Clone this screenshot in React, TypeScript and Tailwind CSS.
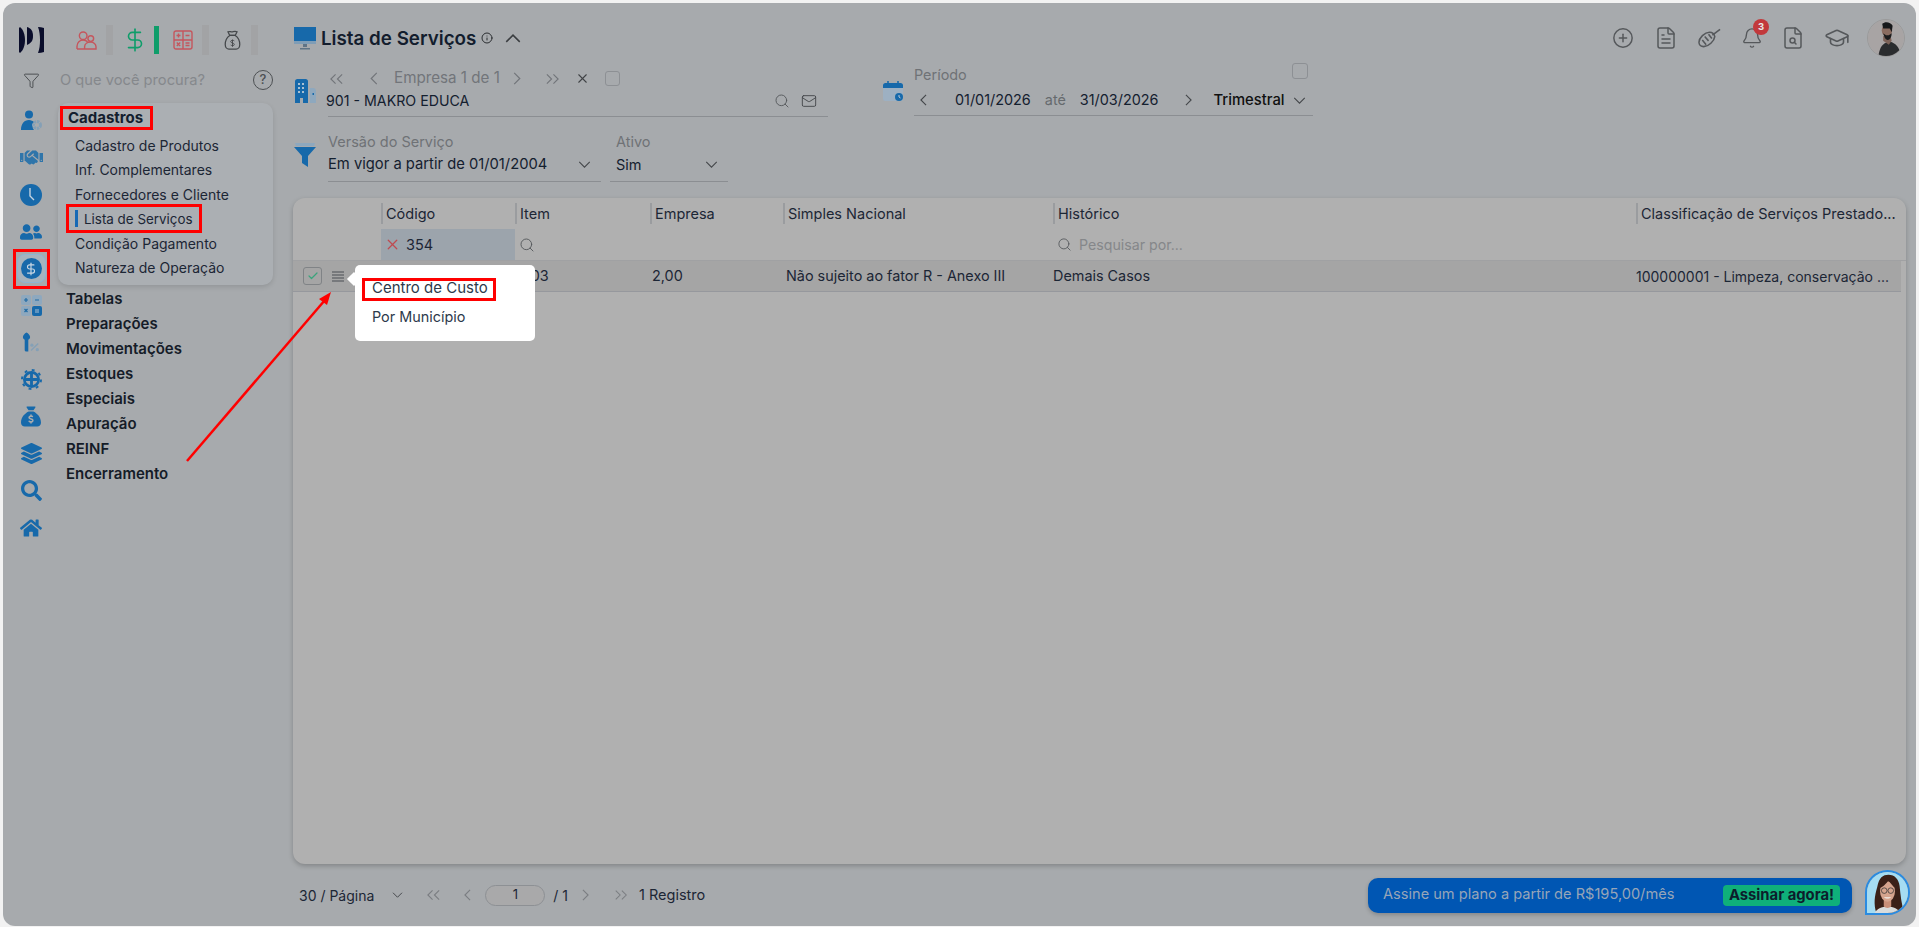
import { Bell, Check, CirclePlus, DollarSign, FileSearch, FileText, Filter, GraduationCap, Info, Mail, Search, X } from "lucide-react";
import { FaHandshake, FaHome, FaLayerGroup, FaSearch, FaUserFriends } from "react-icons/fa";
import { FaSackDollar } from "react-icons/fa6";

const menuItems = ["Cadastro de Produtos", "Inf. Complementares", "Fornecedores e Cliente", "Lista de Serviços", "Condição Pagamento", "Natureza de Operação"];
const menuGroups = ["Tabelas", "Preparações", "Movimentações", "Estoques", "Especiais", "Apuração", "REINF", "Encerramento"];

function DoubleChevron({ right, className }: { right?: boolean; className?: string }) {
  return (
    <svg viewBox="0 0 16 12" fill="none" stroke="currentColor" strokeWidth="1.2" className={className}>
      {right ? <path d="M2 1l5 5-5 5M9 1l5 5-5 5" /> : <path d="M7 1L2 6l5 5M14 1L9 6l5 5" />}
    </svg>
  );
}

function ChevDown({ className, up }: { className?: string; up?: boolean }) {
  return (
    <svg viewBox="0 0 14 8" fill="none" stroke="currentColor" strokeWidth="1.3" className={className}>
      <path d={up ? "M1 7l6-6 6 6" : "M1 1l6 6 6-6"} />
    </svg>
  );
}

function ChevSide({ className, right }: { className?: string; right?: boolean }) {
  return (
    <svg viewBox="0 0 8 14" fill="none" stroke="currentColor" strokeWidth="1.3" className={className}>
      <path d={right ? "M1 1l6 6-6 6" : "M7 1L1 7l6 6"} />
    </svg>
  );
}

function Logo() {
  return (
    <svg viewBox="0 0 26 26" className="w-[26px] h-[26px]" fill="#0a0d2b">
      <path d="M0 1l1-1c3.500 3 5 8 5 13s-1.500 10-5 13l-1-1z" />
      <path d="M8 0c4 1 6 4 6 9s-2 7-6 9z" />
      <path d="M19 0c2 0 4 .5 6 1v24c-2 .5-4 1-6 1 1.500-4 2-8 2-13s-.5-9-2-13z" />
    </svg>
  );
}

function Broom() {
  return (
    <svg viewBox="0 0 24 20" fill="none" stroke="currentColor" strokeWidth="1.6" className="w-[23px] h-[20px]">
      <path d="M15 7l8-6" />
      <path d="M12 4c3 0 5 2 5.500 4.500C17 13 11 19 6 19c-3 0-5-2-5-4.500C1 10 7 4 12 4z" />
      <path d="M7 8.500l4 4.500M4.500 12l4 5M11 6l3.500 4.500" />
    </svg>
  );
}

function MoneyBag() {
  return (
    <svg viewBox="0 0 18 22" fill="none" stroke="#45484b" strokeWidth="1.4" className="w-[17px] h-[20px]">
      <path d="M6 6L4 2c2-1 3 .5 5 0s3-1 5 0l-2 4z" />
      <path d="M6 6h6c3 2 5 6 5 10 0 3-2 5-4 5H5c-2 0-4-2-4-5 0-4 2-8 5-10z" />
      <path d="M11 12c-1-1-4-1-4 .8s4 1.200 4 3-3 1.700-4 .7M9 10.500v8" strokeWidth="1" />
    </svg>
  );
}

function PeopleRed() {
  return (
    <svg viewBox="0 0 22 20" fill="none" stroke="#c5565d" strokeWidth="1.5" className="w-[21px] h-[19px]">
      <circle cx="7.500" cy="5" r="4" />
      <circle cx="15.500" cy="8" r="3" />
      <path d="M1 19v-3c0-4 3-6.500 6.500-6.500 2 0 3.500.7 4.500 2M9 19h12v-2.500c0-2.500-2.500-5-5.500-5-3.500 0-6.500 2-6.500 5zM1 19h8" />
    </svg>
  );
}

function Calc({ red }: { red?: boolean }) {
  if (red) {
    return (
      <svg viewBox="0 0 20 20" fill="none" stroke="#c5565d" strokeWidth="1.4" className="w-[20px] h-[20px]">
        <rect x="1" y="1" width="18" height="18" rx="2" />
        <path d="M10 1v18M1 10h18M3.500 5.500h4M5.500 3.500v4M12.500 5.500h4M3.800 12.500l3.400 3.400M7.200 12.500l-3.400 3.400M12.500 13h4M12.500 15.500h4" />
      </svg>
    );
  }
  return (
    <svg viewBox="0 0 21 21" className="w-[21px] h-[21px]">
      <rect x="0" y="0" width="10" height="10" rx="2" fill="#8ea8be" />
      <rect x="11" y="0" width="10" height="10" rx="2" fill="#8ea8be" />
      <rect x="0" y="11" width="10" height="10" rx="2" fill="#8ea8be" />
      <rect x="11" y="11" width="10" height="10" rx="2" fill="#1769aa" />
      <path d="M3 5h4M5 3v4M14 5h4M3.500 14l3 3M6.500 14l-3 3" stroke="#1e6aa5" strokeWidth="1.2" />
      <path d="M14 15h4M14 17h4" stroke="#a9c0d2" strokeWidth="1.2" />
    </svg>
  );
}

function PersonGear() {
  return (
    <svg viewBox="0 0 21 21" className="w-[21px] h-[21px]">
      <circle cx="8" cy="4.500" r="4" fill="#1769aa" />
      <path d="M0 20c0-6 3-10 8-10 2 0 4 1 5 2-2 2-2 6 0 8z" fill="#1769aa" />
      <circle cx="16" cy="15" r="3.500" fill="none" stroke="#85a0b6" strokeWidth="3" strokeDasharray="2.400 0.800" />
    </svg>
  );
}

function Clock() {
  return (
    <svg viewBox="0 0 22 22" className="w-[22px] h-[22px]">
      <circle cx="11" cy="11" r="11" fill="#1769aa" />
      <path d="M10 4v8l4 4" fill="none" stroke="#c4d3e0" strokeWidth="1.400" />
    </svg>
  );
}

function KeyPct() {
  return (
    <svg viewBox="0 0 20 22" className="w-[18px] h-[21px]">
      <path d="M5 0c2 1 4 3 4 5 0 1.500-1 2.500-2 3v13H4l-1-1V8C2 7.500 1 6.500 1 5c0-2 2-4 4-5z" fill="#1769aa" />
      <path d="M10 20l8-8" stroke="#85a0b6" strokeWidth="1.600" />
      <circle cx="11" cy="14" r="1.800" fill="#85a0b6" />
      <circle cx="17" cy="19" r="1.800" fill="#85a0b6" />
    </svg>
  );
}

function GearCross() {
  return (
    <svg viewBox="0 0 22 22" className="w-[21px] h-[21px]" fill="none" stroke="#1769aa">
      <circle cx="11" cy="11" r="7.500" strokeWidth="2.800" />
      <circle cx="11" cy="11" r="10" strokeWidth="2" strokeDasharray="3 4.850" />
      <path d="M11 4v14M4 11h14" strokeWidth="3" />
    </svg>
  );
}

function BuildingIcon() {
  return (
    <svg viewBox="0 0 22 24" className="w-[22px] h-[24px]">
      <path d="M1 2.500A2.500 2.500 0 0 1 3.500 0h8A2.500 2.500 0 0 1 14 2.500V24H9v-5H6v5H1z" fill="#1769aa" />
      <path d="M4 4h2v2H4zM8 4h2v2H8zM4 8h2v2H4zM8 8h2v2H8zM4 12h2v2H4zM8 12h2v2H8z" fill="#a9c0d2" />
      <path d="M16 9h3a3 3 0 0 1 3 3v12h-6z" fill="#8ea8be" />
      <rect x="18.500" y="14" width="1.500" height="2" fill="#1769aa" />
    </svg>
  );
}

function MonitorIcon() {
  return (
    <svg viewBox="0 0 22 24" className="w-[22px] h-[24px]">
      <path d="M0 1h22v14H0z" fill="#1769aa" />
      <path d="M0 15h22v3H0z" fill="#7f9db6" />
      <path d="M9 18h4v3h-4z" fill="#5f7486" />
      <path d="M6 22h10v1.500H6z" fill="#5f7486" />
    </svg>
  );
}

function FunnelIcon() {
  return (
    <svg viewBox="0 0 22 24" className="w-[22px] h-[24px]">
      <path d="M1 0h20l-1 3H2z" fill="#8ea8be" />
      <path d="M0 4h22l-8 9v11l-6-4v-7z" fill="#1769aa" />
    </svg>
  );
}

function CalendarIcon() {
  return (
    <svg viewBox="0 0 20 20" className="w-[20px] h-[20px]">
      <rect x="0" y="2" width="20" height="18" rx="2.500" fill="#9db0c2" />
      <path d="M0 4.500A2.500 2.500 0 0 1 2.500 2h15A2.500 2.500 0 0 1 20 4.500V7H0z" fill="#1769aa" />
      <path d="M5 0v4M15 0v4" stroke="#1769aa" strokeWidth="1.600" />
      <circle cx="16" cy="16" r="4" fill="#1769aa" />
      <path d="M16 14v2l1.500 1" stroke="#b8c9d8" fill="none" />
    </svg>
  );
}

function ManAvatar() {
  return (
    <svg viewBox="0 0 38 38" className="w-[38px] h-[38px] rounded-full border border-[#9a9a9a]">
      <rect width="38" height="38" fill="#a8a4a4" />
      <path d="M11 38c1-7 3-12 8-14l5-1c5 2 9 5 11 15z" fill="#2a2c2e" />
      <path d="M16 22l6 4 3-4-1-4-8-1z" fill="#7c6258" />
      <ellipse cx="20" cy="11" rx="5.500" ry="6.500" fill="#8a6c60" />
      <path d="M15 4c3-3 9-2 11 2l-1 7-2-4-7 0z" fill="#17181a" />
      <path d="M16 14c1 3 2 7 5 7 2 0 4-3 4-7l-3 2h-3z" fill="#1c1c1d" />
    </svg>
  );
}

function WomanAvatar() {
  return (
    <svg viewBox="0 0 44 44" className="w-[45px] h-[45px] rounded-full rounded-bl-none border-2 border-[#2b8be0]">
      <rect width="44" height="44" fill="#a5dcf2" />
      <path d="M10 44c-3-10-2-18 1-28C13 6 17 3 23 3c7 0 11 5 12 12 1 10 2 20 5 29z" fill="#3a2018" />
      <path d="M8 44c2-4 8-7 14-7s12 3 14 7z" fill="#d9dcdc" />
      <path d="M18 30h8v7c-2 2-6 2-8 0z" fill="#c98f78" />
      <ellipse cx="22" cy="21" rx="8" ry="11" fill="#d6a48e" />
      <path d="M14 17c3-1 7-5 9-8 2 3 5 6 7 8-1-5-3-9-8-9s-8 4-8 9z" fill="#3a2018" />
      <circle cx="18.500" cy="20" r="3" fill="none" stroke="#333" strokeWidth=".8" />
      <circle cx="25.500" cy="20" r="3" fill="none" stroke="#333" strokeWidth=".8" />
      <path d="M18 27c2 2 6 2 8 0z" fill="#f4f1ee" />
    </svg>
  );
}

function SideIcon({ children }: { children: React.ReactNode }) {
  return <div className="h-[37px] flex items-center justify-center text-[#1769aa]">{children}</div>;
}

function Sidebar() {
  return (
    <aside className="w-[290px] shrink-0 flex flex-col">
      <div className="h-[30px] mt-[22px] flex items-center pl-[16px]">
        <Logo />
        <div className="ml-[31px]"><PeopleRed /></div>
        <div className="w-[7px] h-[30px] ml-[9px] bg-[#a2a3a5]" />
        <DollarSign className="w-[26px] h-[26px] ml-[9px] text-[#0f9d6a]" strokeWidth={1.5} />
        <div className="w-[5px] h-[28px] ml-[6px] bg-[#0f9d6a]" />
        <div className="ml-[14px]"><Calc red /></div>
        <div className="w-[7px] h-[30px] ml-[9px] bg-[#a2a3a5]" />
        <div className="ml-[15px]"><MoneyBag /></div>
        <div className="w-[7px] h-[30px] ml-[10px] bg-[#a2a3a5]" />
      </div>

      <div className="h-[20px] mt-[15px] flex items-center pl-[20px]">
        <Filter className="w-[17px] h-[17px] text-[#45484b]" strokeWidth={1.3} />
        <span className="ml-[20px] text-[14.700px] text-[#85888c]">O que você procura?</span>
        <div className="ml-auto mr-[20px] w-[20px] h-[20px] rounded-full border-[1.500px] border-[#4d5053] flex items-center justify-center text-[13px] font-medium text-[#4d5053]">?</div>
      </div>

      <div className="flex mt-[13px]">
        <div className="w-[55px] flex flex-col pl-[1px] -mt-[1px]">
          <SideIcon><PersonGear /></SideIcon>
          <SideIcon><FaHandshake className="w-[23px] h-[23px] text-[#2f75aa]" /></SideIcon>
          <SideIcon><Clock /></SideIcon>
          <SideIcon><FaUserFriends className="w-[22px] h-[22px]" /></SideIcon>
          <SideIcon>
            <div className="w-[29px] h-[29px] rounded-[8px] border border-[#8fb4d2] bg-[#a6b3bd] flex items-center justify-center">
              <div className="w-[21px] h-[21px] rounded-full bg-[#1769aa] flex items-center justify-center">
                <DollarSign className="w-[14px] h-[14px] text-[#c9d8e4]" strokeWidth={2} />
              </div>
            </div>
          </SideIcon>
          <SideIcon><Calc /></SideIcon>
          <SideIcon><KeyPct /></SideIcon>
          <SideIcon><GearCross /></SideIcon>
          <SideIcon><FaSackDollar className="w-[20px] h-[21px]" /></SideIcon>
          <SideIcon><FaLayerGroup className="w-[21px] h-[21px]" /></SideIcon>
          <SideIcon><FaSearch className="w-[21px] h-[21px]" /></SideIcon>
          <SideIcon><FaHome className="w-[22px] h-[22px]" /></SideIcon>
        </div>

        <div className="flex flex-col">
          <div className="w-[215px] h-[182px] rounded-[10px] bg-[#abafb3] shadow-[0_2px_5px_rgba(0,0,0,0.12)] pt-[3px]">
            <div className="h-[24px] pl-[10px] flex items-center text-[15px] font-bold text-[#141e2e]">Cadastros</div>
            <div className="flex flex-col mt-[3px]">
              {menuItems.map((item) => (
                <div key={item} className={`h-[24.500px] pl-[17px] flex items-center text-[#1c2635] ${item === "Lista de Serviços" ? "text-[13.400px]" : "text-[14px]"}`}>
                  {item === "Lista de Serviços" && <span className="w-[3px] h-[17px] bg-[#1769b5] mr-[6px]" />}
                  {item}
                </div>
              ))}
            </div>
          </div>
          <div className="flex flex-col pl-[8px] mt-[2px]">
            {menuGroups.map((g) => (
              <div key={g} className="h-[25px] flex items-center text-[15px] font-semibold text-[#151c28]">{g}</div>
            ))}
          </div>
        </div>
      </div>
    </aside>
  );
}

function TopBar() {
  return (
    <div className="h-[38px] mt-[16px] flex items-center justify-between pr-[11px]">
      <div className="flex items-center pl-[1px]">
        <MonitorIcon />
        <h1 className="ml-[5px] mt-[2px] text-[18.800px] font-semibold text-[#131d2d]">Lista de Serviços</h1>
        <Info className="w-[12px] h-[12px] ml-[5px] text-[#2b2e31]" />
        <ChevDown up className="w-[16px] h-[9px] ml-[12px] text-[#3a3d40]" />
      </div>
      <div className="flex items-center text-[#55585b]">
        <CirclePlus className="w-[22px] h-[22px]" strokeWidth={1.6} />
        <FileText className="w-[24px] h-[24px] ml-[20px]" strokeWidth={1.5} />
        <div className="ml-[20px]"><Broom /></div>
        <div className="relative ml-[20px]">
          <Bell className="w-[22px] h-[22px]" strokeWidth={1.5} />
          <span className="absolute -top-[8px] -right-[6px] w-[16px] h-[16px] rounded-full bg-[#c2393c] text-[#e7e7e7] text-[9.500px] font-bold flex items-center justify-center">3</span>
        </div>
        <FileSearch className="w-[24px] h-[24px] ml-[18px]" strokeWidth={1.5} />
        <GraduationCap className="w-[26px] h-[26px] ml-[19px]" strokeWidth={1.5} />
        <div className="ml-[17px]"><ManAvatar /></div>
      </div>
    </div>
  );
}

function CompanyAndPeriod() {
  return (
    <div className="flex mt-[10px]">
      <div className="w-[535px] flex items-center pl-[1px]">
        <div className="-mt-[2px]"><BuildingIcon /></div>
        <div className="flex-1 ml-[12px]">
          <div className="h-[19px] mt-[2px] flex items-center text-[#72757a]">
            <DoubleChevron className="w-[15px] h-[12px] ml-[1px]" />
            <ChevSide className="w-[8px] h-[13px] ml-[26px]" />
            <span className="ml-[16px] text-[15.200px]">Empresa 1 de 1</span>
            <ChevSide right className="w-[8px] h-[13px] ml-[13px]" />
            <DoubleChevron right className="w-[15px] h-[12px] ml-[24px]" />
            <X className="w-[15px] h-[15px] ml-[15px] text-[#404346]" strokeWidth={1.700} />
            <div className="w-[15px] h-[15px] ml-[15px] rounded-[3px] border border-[#8d9094]" />
          </div>
          <div className="h-[29px] pb-[2px] flex items-center border-b border-[#8b8e92] text-[#14202f] text-[14.200px]">
            <span className="-ml-[2px]">901 - MAKRO EDUCA</span>
            <Search className="w-[16px] h-[16px] ml-auto text-[#55585b]" strokeWidth={1.4} />
            <Mail className="w-[16px] h-[16px] ml-[11px] mr-[11px] text-[#45484b]" strokeWidth={1.4} />
          </div>
        </div>
      </div>
      <div className="w-[430px] ml-[55px] flex items-center">
        <div className="-mt-[3px]"><CalendarIcon /></div>
        <div className="flex-1 ml-[11px]">
          <div className="h-[19px] -mt-[2px] pb-[2px] flex items-center justify-between text-[14.400px] text-[#6f7276]">
            <span>Período</span>
            <div className="w-[16px] h-[16px] mr-[5px] -mt-[8px] rounded-[3px] border border-[#8d9094]" />
          </div>
          <div className="h-[31px] flex items-center border-b border-[#8b8e92] text-[14.400px] text-[#14202f]">
            <ChevSide className="w-[7px] h-[12px] ml-[6px] text-[#45484b]" />
            <span className="ml-[28px]">01/01/2026</span>
            <span className="ml-[14px] text-[#666a6e]">até</span>
            <span className="ml-[14px]">31/03/2026</span>
            <ChevSide right className="w-[7px] h-[12px] ml-[27px] text-[#45484b]" />
            <span className="ml-[21px] font-medium text-[14.800px] text-[#101010]">Trimestral</span>
            <ChevDown className="w-[13px] h-[7px] ml-[8px] text-[#45484b]" />
          </div>
        </div>
      </div>
    </div>
  );
}

function Filters() {
  return (
    <div className="flex items-center mt-[15px] pl-[1px]">
      <div className="-mt-[5px]"><FunnelIcon /></div>
      <div className="w-[273px] ml-[12px]">
        <div className="h-[18px] pt-[2px] text-[14.500px] text-[#6f7276] flex items-center">Versão do Serviço</div>
        <div className="h-[32px] pb-[2px] flex items-center justify-between border-b border-[#8b8e92] text-[14.750px] text-[#14202f]">
          <span>Em vigor a partir de 01/01/2004</span>
          <ChevDown className="w-[13px] h-[7px] mr-[10px] text-[#45484b]" />
        </div>
      </div>
      <div className="w-[118px] ml-[9px]">
        <div className="h-[18px] pt-[2px] text-[14.500px] text-[#6f7276] flex items-center pl-[6px]">Ativo</div>
        <div className="h-[32px] pb-[2px] pl-[6px] flex items-center justify-between border-b border-[#8b8e92] text-[14.500px] text-[#14202f]">
          <span>Sim</span>
          <ChevDown className="w-[13px] h-[7px] mr-[10px] text-[#45484b]" />
        </div>
      </div>
    </div>
  );
}

const columns = [
  { label: "Código", value: "" },
  { label: "Item", value: "" },
  { label: "Empresa", value: "2,00" },
  { label: "Simples Nacional", value: "Não sujeito ao fator R - Anexo III" },
  { label: "Histórico", value: "Demais Casos" },
  { label: "Classificação de Serviços Prestado...", value: "100000001 - Limpeza, conservação ..." },
];

const gridCols = "grid grid-cols-[88px_134px_135px_133px_270px_583px_270px]";

function ServicesTable() {
  return (
    <div className="flex-1 mt-[16px] mr-[10px] rounded-[12px] bg-[#b0b0b0] shadow-[0_2px_5px_rgba(0,0,0,0.22)] overflow-hidden">
      <div className={`${gridCols} h-[31px] items-center`}>
        <div />
        {columns.map((c) => (
          <div key={c.label} className="flex items-center h-[21px] text-[14.500px] text-[#1c2635] whitespace-nowrap">
            <span className="w-[2px] h-[21px] bg-[#9a9c9f]" />
            <span className="ml-[3px]">{c.label}</span>
          </div>
        ))}
      </div>
      <div className={`${gridCols} h-[32px] border-b border-[#a0a1a3]`}>
        <div />
        <div className="bg-[#9ca4ac] flex items-center text-[14.500px] text-[#1c2635]">
          <X className="w-[17px] h-[17px] ml-[3px] text-[#bf4a50]" strokeWidth={1.8} />
          <span className="ml-[5px]">354</span>
        </div>
        <div className="flex items-center">
          <Search className="w-[16px] h-[16px] ml-[4px] text-[#55585b]" strokeWidth={1.4} />
        </div>
        <div />
        <div />
        <div className="flex items-center">
          <Search className="w-[15px] h-[15px] ml-[4px] text-[#55585b]" strokeWidth={1.4} />
          <span className="ml-[7px] text-[14.200px] text-[#85878a]">Pesquisar por...</span>
        </div>
        <div />
      </div>
      <div className={`${gridCols} mr-[5px] h-[31px] items-center bg-[#a5a5a5] border-b border-[#96989d] text-[14.400px] text-[#1c2635]`}>
        <div className="flex items-center pl-[10px]">
          <div className="w-[19px] h-[18px] rounded-[3px] border border-[#808386] flex items-center justify-center">
            <Check className="w-[12px] h-[12px] text-[#3aa47c]" strokeWidth={2.400} />
          </div>
          <div className="ml-[10px] flex flex-col gap-[1px]">
            <span className="w-[12px] h-[2px] bg-[#77797c]" />
            <span className="w-[12px] h-[2px] bg-[#77797c]" />
            <span className="w-[12px] h-[2px] bg-[#77797c]" />
            <span className="w-[12px] h-[2px] bg-[#77797c]" />
          </div>
        </div>
        <div />
        <div className="pl-[6px]">1.03</div>
        {columns.slice(2).map((c, i) => (
          <div key={c.label} className={`whitespace-nowrap ${i === 0 ? "pl-[2px]" : i === 1 ? "pl-[3px]" : i === 3 ? "text-[14px]" : ""}`}>{c.value}</div>
        ))}
      </div>
    </div>
  );
}

function Footer() {
  return (
    <div className="h-[62px] flex items-center pr-[6px] text-[14px] text-[#1c2635]">
      <span className="ml-[6px]">30 / Página</span>
      <ChevDown className="w-[11px] h-[6px] ml-[18px] text-[#45484b]" />
      <DoubleChevron className="w-[15px] h-[12px] ml-[23px] text-[#7b7e82]" />
      <ChevSide className="w-[7px] h-[12px] ml-[23px] text-[#7b7e82]" />
      <div className="w-[60px] h-[21px] ml-[14px] rounded-full border border-[#8d9094] bg-[#a9a9aa] flex items-center justify-center text-[13px]">1</div>
      <span className="ml-[8px]">/ 1</span>
      <ChevSide right className="w-[7px] h-[12px] ml-[14px] text-[#7b7e82]" />
      <DoubleChevron right className="w-[14px] h-[12px] ml-[25px] text-[#7b7e82]" />
      <span className="ml-[11px] text-[14.500px]">1 Registro</span>
      <div className="ml-auto h-[35px] w-[484px] rounded-[10px] bg-[#0056b3] shadow-[0_2px_4px_rgba(0,0,0,0.2)] flex items-center justify-between pl-[15px] pr-[12px]">
        <span className="text-[14.600px] text-[#97a5b8]">Assine um plano a partir de R$195,00/mês</span>
        <span className="h-[21px] w-[117px] rounded-[4px] bg-[#0fb07a] flex items-center justify-center text-[14.800px] font-bold text-[#0c1d2c]">Assinar agora!</span>
      </div>
      <div className="ml-[13px] -mt-[6px]"><WomanAvatar /></div>
    </div>
  );
}

function ContextMenu() {
  return (
    <div className="absolute left-[355px] top-[265px] w-[180px] h-[76px] rounded-[5px] bg-white text-[15px] text-[#2d3a4c]">
      <div className="absolute -left-[6px] top-[9px] w-[10px] h-[10px] rotate-45 bg-white" />
      <div className="absolute left-[17px] top-[12px]">Centro de Custo</div>
      <div className="absolute left-[17px] top-[41px] text-[14.400px]">Por Município</div>
    </div>
  );
}

function Annotations() {
  return (
    <>
      <div className="absolute left-[60px] top-[106px] w-[93px] h-[24px] border-[3px] border-[#f00]" />
      <div className="absolute left-[66px] top-[204px] w-[136px] h-[29px] border-[3px] border-[#f00]" />
      <div className="absolute left-[13px] top-[249px] w-[37px] h-[40px] border-[3px] border-[#f00]" />
      <div className="absolute left-[362px] top-[278px] w-[134px] h-[23px] border-[3px] border-[#f00]" />
      <svg className="absolute left-0 top-0 w-[1919px] h-[927px] pointer-events-none" viewBox="0 0 1919 927">
        <path d="M187 461L325 300" stroke="#f00" strokeWidth="2.500" fill="none" />
        <path d="M331 292L319 299L327 305z" fill="#f00" />
      </svg>
    </>
  );
}

export default function App() {
  return (
    <div className="relative w-full h-screen bg-[#f2f2f2] pt-[3px] pl-[3px] pr-[3px] pb-[1px] overflow-hidden font-['Inter',sans-serif]">
      <div className="flex h-full rounded-[12px] bg-[#a7aaad] overflow-hidden">
        <Sidebar />
        <main className="flex-1 min-w-0 flex flex-col">
          <TopBar />
          <CompanyAndPeriod />
          <Filters />
          <ServicesTable />
          <Footer />
        </main>
      </div>
      <ContextMenu />
      <Annotations />
    </div>
  );
}
